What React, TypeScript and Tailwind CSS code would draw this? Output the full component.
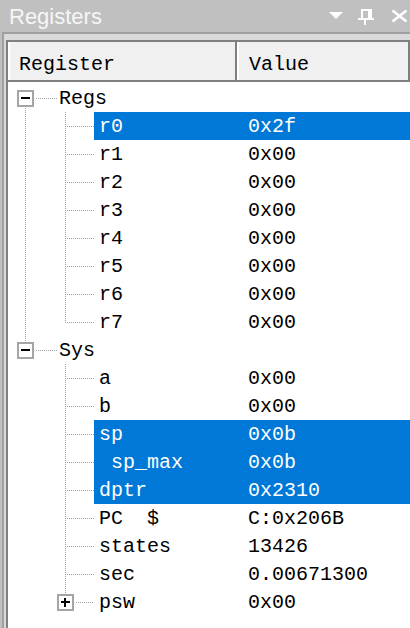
import React from 'react';

const DOT = '#a0a0a0';
const MONO = { fontFamily: '"Liberation Mono", monospace' };

type Row =
    | { kind: 'root'; label: string; first: boolean; last: boolean }
    | { kind: 'child'; label: string; value: string; sel?: boolean; outer: boolean; last?: boolean; plus?: boolean };

const rows: Row[] = [
    { kind: 'root', label: 'Regs', first: true, last: false },
    { kind: 'child', label: 'r0', value: '0x2f', sel: true, outer: true },
    { kind: 'child', label: 'r1', value: '0x00', outer: true },
    { kind: 'child', label: 'r2', value: '0x00', outer: true },
    { kind: 'child', label: 'r3', value: '0x00', outer: true },
    { kind: 'child', label: 'r4', value: '0x00', outer: true },
    { kind: 'child', label: 'r5', value: '0x00', outer: true },
    { kind: 'child', label: 'r6', value: '0x00', outer: true },
    { kind: 'child', label: 'r7', value: '0x00', outer: true, last: true },
    { kind: 'root', label: 'Sys', first: false, last: true },
    { kind: 'child', label: 'a', value: '0x00', outer: false },
    { kind: 'child', label: 'b', value: '0x00', outer: false },
    { kind: 'child', label: 'sp', value: '0x0b', sel: true, outer: false },
    { kind: 'child', label: ' sp_max', value: '0x0b', sel: true, outer: false },
    { kind: 'child', label: 'dptr', value: '0x2310', sel: true, outer: false },
    { kind: 'child', label: 'PC  $', value: 'C:0x206B', outer: false },
    { kind: 'child', label: 'states', value: '13426', outer: false },
    { kind: 'child', label: 'sec', value: '0.00671300', outer: false },
    { kind: 'child', label: 'psw', value: '0x00', outer: false, last: true, plus: true },
];

function RootGutter({ first, last }: { first: boolean; last: boolean }) {
    return (
        <svg width="49" height="28" className="shrink-0">
            {!first && <line x1="17.5" y1="0" x2="17.5" y2="6" stroke={DOT} strokeDasharray="1 1" />}
            {!last && <line x1="17.5" y1="24" x2="17.5" y2="28" stroke={DOT} strokeDasharray="1 1" />}
            <rect x="10" y="7" width="15" height="15" fill="white" stroke="#a5a5a5" strokeWidth="2" />
            <rect x="13" y="13" width="9" height="2" fill="black" />
            <line x1="28" y1="14.5" x2="49" y2="14.5" stroke={DOT} strokeDasharray="1 1" />
        </svg>
    );
}

function ChildGutter({ outer, last, plus }: { outer: boolean; last?: boolean; plus?: boolean }) {
    return (
        <svg width="86" height="28" className="shrink-0">
            {outer && <line x1="17.5" y1="0" x2="17.5" y2="28" stroke={DOT} strokeDasharray="1 1" />}
            {plus ? (
                <>
                    <line x1="57.5" y1="0" x2="57.5" y2="6" stroke={DOT} strokeDasharray="1 1" />
                    <rect x="50" y="7" width="15" height="15" fill="white" stroke="#a5a5a5" strokeWidth="2" />
                    <rect x="53" y="13" width="9" height="2" fill="black" />
                    <rect x="56" y="10" width="2" height="9" fill="black" />
                    <line x1="68" y1="14.5" x2="86" y2="14.5" stroke={DOT} strokeDasharray="1 1" />
                </>
            ) : (
                <>
                    <line x1="57.5" y1="0" x2="57.5" y2={last ? 15 : 28} stroke={DOT} strokeDasharray="1 1" />
                    <line x1="59" y1="14.5" x2="86" y2="14.5" stroke={DOT} strokeDasharray="1 1" />
                </>
            )}
        </svg>
    );
}

function TreeRow({ row }: { row: Row }) {
    if (row.kind === 'root') {
        return (
            <div className="flex h-[28px] items-center">
                <RootGutter first={row.first} last={row.last} />
                <span className="pl-[2px] pt-[2px] text-[20px] whitespace-pre text-black" style={MONO}>
                    {row.label}
                </span>
            </div>
        );
    }
    return (
        <div className="flex h-[28px] items-center">
            <ChildGutter outer={row.outer} last={row.last} plus={row.plus} />
            <div
                className={`flex h-full flex-1 items-center pt-[2px] text-[20px] whitespace-pre ${
                    row.sel ? 'bg-[#0078d7] text-white' : 'text-black'
                }`}
                style={MONO}
            >
                <span className="w-[154px] shrink-0 pl-[5px]">{row.label}</span>
                <span>{row.value}</span>
            </div>
        </div>
    );
}

export default function App() {
    return (
        <div className="flex h-[628px] w-[410px] flex-col overflow-hidden bg-[#c0c0c0]">
            {/* title bar */}
            <div className="flex h-[32px] shrink-0 items-center">
                <span
                    className="pl-[9px] text-[22px] text-[#f6f6f6]"
                    style={{ fontFamily: '"Liberation Sans", Arial, sans-serif' }}
                >
                    Registers
                </span>
                <div className="flex-1" />
                <svg width="14" height="8" className="mb-[1px]">
                    <polygon points="0,0 14,0 7,7" fill="white" />
                </svg>
                <svg width="16" height="17" className="ml-[15px]" shapeRendering="crispEdges">
                    <rect x="3" y="1" width="2" height="9" fill="white" />
                    <rect x="3" y="1" width="11" height="2" fill="white" />
                    <rect x="10" y="1" width="4" height="9" fill="white" />
                    <rect x="0" y="10" width="16" height="2" fill="white" />
                    <rect x="6" y="12" width="2" height="5" fill="white" />
                </svg>
                <svg width="17" height="14" className="ml-[17px] mr-[2px]">
                    <path d="M1.5 1.5 L15.5 12.5 M15.5 1.5 L1.5 12.5" stroke="white" strokeWidth="2.6" />
                </svg>
            </div>

            {/* frame */}
            <div className="ml-[2px] flex flex-1 flex-col border-l-2 border-t-2 border-[#a0a0a0] bg-[#dadada] pl-[2px] pt-[6px]">
                <div className="flex flex-1 flex-col border-l-2 border-t-2 border-[#808080] bg-white">
                    {/* header */}
                    <div className="flex h-[40px] shrink-0 border-b-2 border-[#808080] bg-[#f0f0f0] text-[20px] text-black" style={MONO}>
                        <div className="flex w-[229px] items-center border-l-2 border-r-2 border-l-white border-r-[#808080] pl-[9px] pt-[7px]">
                            Register
                        </div>
                        <div className="flex flex-1 items-center border-l-2 border-r-2 border-l-white border-r-[#808080] pl-[10px] pt-[7px]">
                            Value
                        </div>
                    </div>
                    <div className="pt-[2px]">
                        {rows.map((r, i) => (
                            <TreeRow key={i} row={r} />
                        ))}
                    </div>
                </div>
            </div>
        </div>
    );
}
